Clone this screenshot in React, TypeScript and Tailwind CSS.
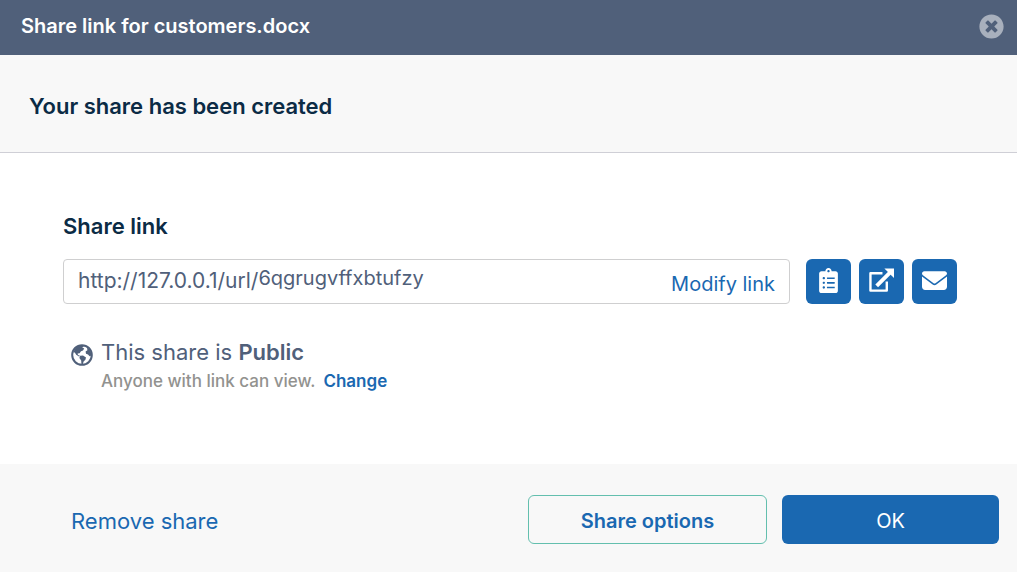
import { FaClipboardList, FaTimesCircle } from "react-icons/fa";
import { FaEnvelope } from "react-icons/fa6";

const OpenIcon = ({ className }: { className?: string }) => (
  <svg viewBox="0 0 26 26" fill="none" className={className} aria-hidden="true">
    <path
      d="M14 5.5H1.5v18h17V14"
      stroke="currentColor"
      strokeWidth="2.5"
      strokeLinejoin="round"
    />
    <path d="M8 18.5 21.5 5" stroke="currentColor" strokeWidth="4" />
    <path d="M16 0.5h10v10z" fill="currentColor" />
  </svg>
);

const GlobeIcon = ({ className }: { className?: string }) => (
  <svg viewBox="0 0 22 22" fill="none" className={className} aria-hidden="true">
    <circle cx="11" cy="11" r="9.8" stroke="currentColor" strokeWidth="2" />
    <path
      d="M2 8.5 5 3.5 9.5 1.5 13 2.2 11.2 3.6 13.2 4.6 12 6.6 10 7.2 8.6 9.2 6.6 9.4 7 11 9 11.8 8 12.4 5.2 10.8 3.8 8.6Z"
      fill="currentColor"
    />
    <path
      d="M9 11.8 12 11.6 15 13.4 14.4 15.8 12.6 17.4 11.8 20.2 10.4 20 10.2 16.4 8.4 14Z"
      fill="currentColor"
    />
    <path
      d="M16 3 19.6 7 20.6 11.5 18.6 12.2 17 10.4 15 9.8 14.6 7.4 16.4 6.2Z"
      fill="currentColor"
    />
  </svg>
);

const actions = [
  { label: "Copy link", Icon: FaClipboardList },
  { label: "Open link", Icon: OpenIcon },
  { label: "Email link", Icon: FaEnvelope },
];

const App = () => {
  return (
    <div className="flex min-h-screen flex-col bg-white font-['Inter',sans-serif] text-[#50607a]">
      <header className="flex items-center justify-between bg-[#50607a] pt-3 pr-[13px] pb-[15px] pl-[21px]">
        <h1 className="text-xl font-semibold text-white">
          Share link for customers.docx
        </h1>
        <button type="button" aria-label="Close" className="text-[#a8b0bd]">
          <FaTimesCircle className="size-[25px]" />
        </button>
      </header>

      <div className="border-b border-[#cfcfd6] bg-[#f8f8f8] px-[29px] pt-[35px] pb-[30px]">
        <h2 className="text-[22px] leading-8 font-semibold text-[#0b2b45]">
          Your share has been created
        </h2>
      </div>

      <main className="flex-1 pt-[57px] pr-[60px] pb-8 pl-[63px]">
        <label
          htmlFor="share-url"
          className="block text-[22px] leading-8 font-semibold text-[#0b2b45]"
        >
          Share link
        </label>
        <div className="mt-[17px] flex gap-4">
          <div className="flex h-[45px] min-w-0 flex-1 items-center rounded border border-[#cfcfd0] px-[14px] text-xl">
            <span className="pb-0.5 text-[21px]">http://127.0.0.1/url/</span>
            <input
              id="share-url"
              readOnly
              value="6qgrugvffxbtufzy"
              className="min-w-0 flex-1 pb-2 outline-none"
            />
            <button type="button" className="pt-1 text-[#1a68b1]">
              Modify link
            </button>
          </div>
          <div className="flex gap-2">
            {actions.map(({ label, Icon }) => (
              <button
                key={label}
                type="button"
                aria-label={label}
                className="flex size-[45px] items-center justify-center rounded-md bg-[#1a68b1] pb-0.5 text-white"
              >
                <Icon className="size-[25px]" />
              </button>
            ))}
          </div>
        </div>

        <div className="mt-8 flex gap-2 pl-2">
          <GlobeIcon className="mt-2 size-[22px] shrink-0" />
          <div>
            <p className="text-[22px] leading-8">
              This share is <b className="font-semibold">Public</b>
            </p>
            <p className="flex gap-2 pt-px text-[17px] leading-6 font-medium text-[#92928f]">
              Anyone with link can view.
              <button type="button" className="font-semibold text-[#1a68b1]">
                Change
              </button>
            </p>
          </div>
        </div>
      </main>

      <footer className="flex items-center gap-[15px] bg-[#f8f8f8] pt-[31px] pr-[18px] pb-7 pl-[71px] text-xl">
        <button type="button" className="pt-1 text-[22px] text-[#1a68b1]">
          Remove share
        </button>
        <button
          type="button"
          className="ml-auto h-[49px] w-[239px] rounded-md border border-[#63bfae] pt-0.5 font-semibold text-[#1a68b1]"
        >
          Share options
        </button>
        <button
          type="button"
          className="h-[49px] w-[217px] rounded-md bg-[#1a68b1] pt-0.5 text-white"
        >
          OK
        </button>
      </footer>
    </div>
  );
};

export default App;
